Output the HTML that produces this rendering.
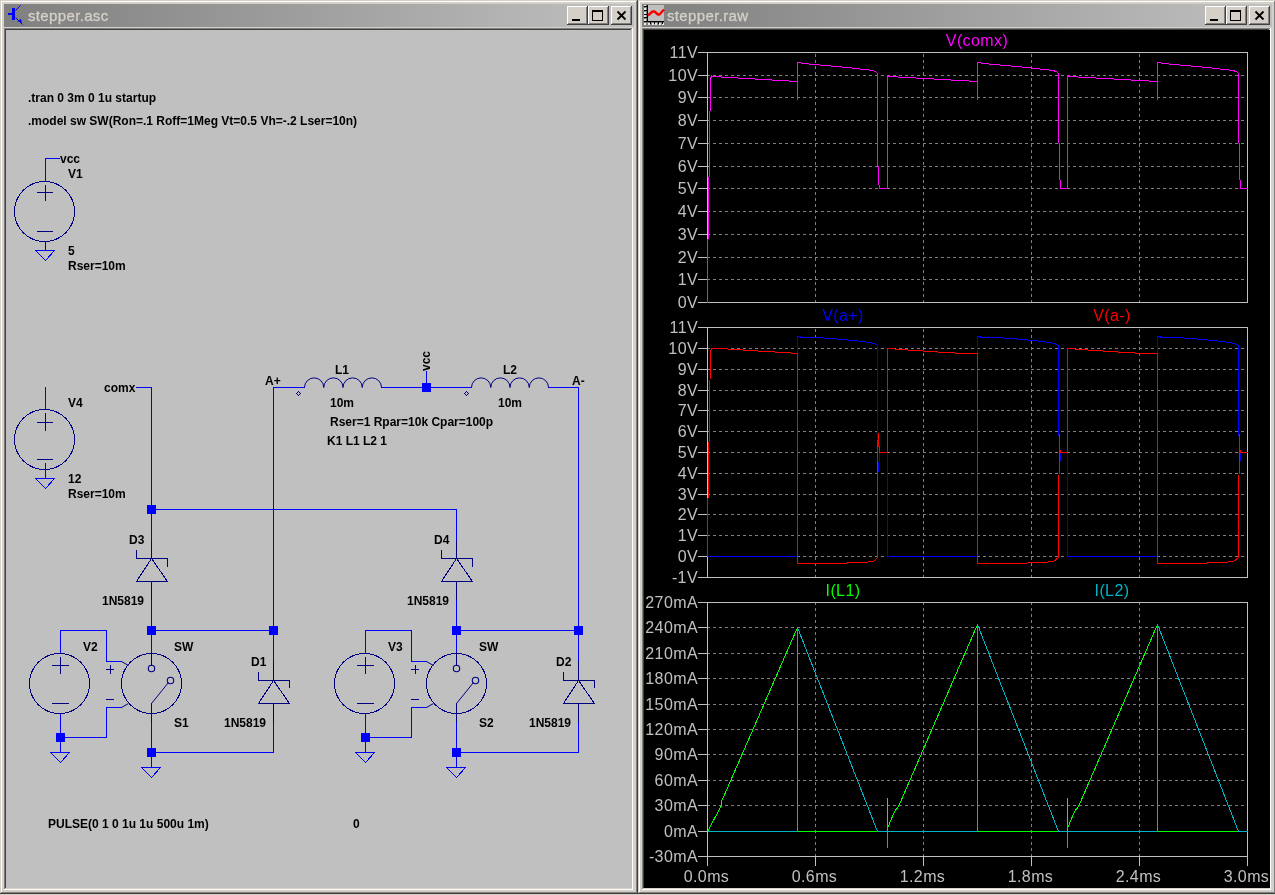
<!DOCTYPE html>
<html><head><meta charset="utf-8"><title>stepper</title>
<style>html,body{margin:0;padding:0;width:1275px;height:895px;overflow:hidden;background:#d4d0c8;position:relative}
svg text{white-space:pre}</style></head><body>
<svg width="1275" height="895" viewBox="0 0 1275 895" style="position:absolute;left:0;top:0;will-change:transform" font-family="'Liberation Sans', sans-serif"><defs><linearGradient id="cap" x1="0" x2="1" y1="0" y2="0"><stop offset="0" stop-color="#808080"/><stop offset="1" stop-color="#c0c0c0"/></linearGradient></defs><rect x="0" y="0" width="1275" height="895" fill="#d4d0c8"/><rect x="0" y="0" width="638" height="894" fill="#d4d0c8"/><rect x="1" y="1" width="635" height="1" fill="#ffffff"/><rect x="1" y="1" width="1" height="891" fill="#ffffff"/><rect x="636" y="1" width="1" height="892" fill="#808080"/><rect x="1" y="892" width="636" height="1" fill="#808080"/><rect x="637" y="0" width="1" height="894" fill="#404040"/><rect x="0" y="893" width="638" height="1" fill="#404040"/><rect x="4" y="4" width="630" height="23" fill="url(#cap)"/><rect x="4" y="28" width="629" height="1" fill="#808080"/><rect x="4" y="28" width="1" height="861" fill="#808080"/><rect x="5" y="29" width="627" height="1" fill="#404040"/><rect x="5" y="29" width="1" height="859" fill="#404040"/><rect x="632" y="28" width="1" height="862" fill="#ffffff"/><rect x="4" y="889" width="629" height="1" fill="#ffffff"/><rect x="631" y="29" width="1" height="860" fill="#d4d0c8"/><rect x="5" y="888" width="627" height="1" fill="#d4d0c8"/><rect x="567" y="6" width="21" height="19" fill="#d4d0c8"/><rect x="567" y="6" width="21" height="1" fill="#ffffff"/><rect x="567" y="6" width="1" height="19" fill="#ffffff"/><rect x="568" y="23" width="19" height="1" fill="#808080"/><rect x="586" y="7" width="1" height="17" fill="#808080"/><rect x="567" y="24" width="21" height="1" fill="#404040"/><rect x="587" y="6" width="1" height="19" fill="#404040"/><rect x="588" y="6" width="21" height="19" fill="#d4d0c8"/><rect x="588" y="6" width="21" height="1" fill="#ffffff"/><rect x="588" y="6" width="1" height="19" fill="#ffffff"/><rect x="589" y="23" width="19" height="1" fill="#808080"/><rect x="607" y="7" width="1" height="17" fill="#808080"/><rect x="588" y="24" width="21" height="1" fill="#404040"/><rect x="608" y="6" width="1" height="19" fill="#404040"/><rect x="611" y="6" width="21" height="19" fill="#d4d0c8"/><rect x="611" y="6" width="21" height="1" fill="#ffffff"/><rect x="611" y="6" width="1" height="19" fill="#ffffff"/><rect x="612" y="23" width="19" height="1" fill="#808080"/><rect x="630" y="7" width="1" height="17" fill="#808080"/><rect x="611" y="24" width="21" height="1" fill="#404040"/><rect x="631" y="6" width="1" height="19" fill="#404040"/><rect x="572" y="19" width="8" height="2" fill="#000"/><rect x="592.5" y="10.5" width="10" height="10" fill="none" stroke="#000" stroke-width="1"/><rect x="592" y="10" width="11" height="2" fill="#000"/><path d="M617.5 11.5 L625.5 19.5 M625.5 11.5 L617.5 19.5" stroke="#000" stroke-width="1.8" fill="none"/><rect x="638" y="0" width="638" height="894" fill="#d4d0c8"/><rect x="639" y="1" width="635" height="1" fill="#ffffff"/><rect x="639" y="1" width="1" height="891" fill="#ffffff"/><rect x="1274" y="1" width="1" height="892" fill="#808080"/><rect x="639" y="892" width="636" height="1" fill="#808080"/><rect x="1275" y="0" width="1" height="894" fill="#404040"/><rect x="638" y="893" width="638" height="1" fill="#404040"/><rect x="642" y="4" width="630" height="23" fill="url(#cap)"/><rect x="642" y="28" width="629" height="1" fill="#808080"/><rect x="642" y="28" width="1" height="861" fill="#808080"/><rect x="643" y="29" width="627" height="1" fill="#404040"/><rect x="643" y="29" width="1" height="859" fill="#404040"/><rect x="1270" y="28" width="1" height="862" fill="#ffffff"/><rect x="642" y="889" width="629" height="1" fill="#ffffff"/><rect x="1269" y="29" width="1" height="860" fill="#d4d0c8"/><rect x="643" y="888" width="627" height="1" fill="#d4d0c8"/><rect x="1205" y="6" width="21" height="19" fill="#d4d0c8"/><rect x="1205" y="6" width="21" height="1" fill="#ffffff"/><rect x="1205" y="6" width="1" height="19" fill="#ffffff"/><rect x="1206" y="23" width="19" height="1" fill="#808080"/><rect x="1224" y="7" width="1" height="17" fill="#808080"/><rect x="1205" y="24" width="21" height="1" fill="#404040"/><rect x="1225" y="6" width="1" height="19" fill="#404040"/><rect x="1226" y="6" width="21" height="19" fill="#d4d0c8"/><rect x="1226" y="6" width="21" height="1" fill="#ffffff"/><rect x="1226" y="6" width="1" height="19" fill="#ffffff"/><rect x="1227" y="23" width="19" height="1" fill="#808080"/><rect x="1245" y="7" width="1" height="17" fill="#808080"/><rect x="1226" y="24" width="21" height="1" fill="#404040"/><rect x="1246" y="6" width="1" height="19" fill="#404040"/><rect x="1249" y="6" width="21" height="19" fill="#d4d0c8"/><rect x="1249" y="6" width="21" height="1" fill="#ffffff"/><rect x="1249" y="6" width="1" height="19" fill="#ffffff"/><rect x="1250" y="23" width="19" height="1" fill="#808080"/><rect x="1268" y="7" width="1" height="17" fill="#808080"/><rect x="1249" y="24" width="21" height="1" fill="#404040"/><rect x="1269" y="6" width="1" height="19" fill="#404040"/><rect x="1210" y="19" width="8" height="2" fill="#000"/><rect x="1230.5" y="10.5" width="10" height="10" fill="none" stroke="#000" stroke-width="1"/><rect x="1230" y="10" width="11" height="2" fill="#000"/><path d="M1255.5 11.5 L1263.5 19.5 M1263.5 11.5 L1255.5 19.5" stroke="#000" stroke-width="1.8" fill="none"/><rect x="6" y="30" width="626" height="858" fill="#c0c0c0"/><rect x="644" y="30" width="626" height="858" fill="#000000"/><text x="28" y="21" fill="#d4d0c8" font-size="15" font-weight="normal" text-anchor="start" stroke="#d4d0c8" stroke-width="0.3" letter-spacing="0.35">stepper.asc</text><text x="667" y="21" fill="#d4d0c8" font-size="15" font-weight="normal" text-anchor="start" stroke="#d4d0c8" stroke-width="0.3" letter-spacing="0.35">stepper.raw</text><g shape-rendering="crispEdges"><rect x="8" y="13" width="4" height="2" fill="#0000ff"/><rect x="12" y="8" width="3" height="12" fill="#0000ff"/></g><line x1="15.5" y1="10.5" x2="20.5" y2="5.5" stroke="#0000ff" stroke-width="1"/><line x1="15.5" y1="17.5" x2="22.5" y2="24.5" stroke="#0000ff" stroke-width="1"/><path d="M17 21 L21 19 L22 23 Z" fill="#0000ff"/><rect x="648" y="5" width="16" height="16" fill="#c0c0c0"/><rect x="647" y="5" width="1" height="17" fill="#000"/><rect x="644" y="21" width="20" height="1" fill="#000"/><rect x="644" y="5" width="2" height="2" fill="#e8e8e8"/><rect x="644" y="8" width="2" height="2" fill="#e8e8e8"/><rect x="644" y="12" width="2" height="2" fill="#e8e8e8"/><rect x="644" y="15" width="2" height="2" fill="#e8e8e8"/><rect x="644" y="19" width="2" height="2" fill="#e8e8e8"/><rect x="644" y="23" width="2" height="2" fill="#e8e8e8"/><rect x="644" y="6" width="3" height="1" fill="#000"/><rect x="644" y="10" width="3" height="1" fill="#000"/><rect x="644" y="14" width="3" height="1" fill="#000"/><rect x="644" y="17" width="3" height="1" fill="#000"/><rect x="648" y="23" width="2" height="2" fill="#e8e8e8"/><rect x="652" y="23" width="2" height="2" fill="#e8e8e8"/><rect x="655" y="23" width="2" height="2" fill="#e8e8e8"/><rect x="659" y="23" width="2" height="2" fill="#e8e8e8"/><rect x="662" y="23" width="2" height="2" fill="#e8e8e8"/><rect x="650" y="21" width="1" height="3" fill="#000"/><rect x="654" y="21" width="1" height="3" fill="#000"/><rect x="658" y="21" width="1" height="3" fill="#000"/><rect x="662" y="21" width="1" height="3" fill="#000"/><polyline points="648,15.5 652.5,11.5 654.5,11.5 658,14.5 659.5,14.5 664,9.5" fill="none" stroke="#ff0000" stroke-width="2.4" stroke-linejoin="round"/><g shape-rendering="crispEdges"></g><g shape-rendering="crispEdges"><rect x="45" y="158" width="1" height="24" fill="#0000ff"/><rect x="45" y="158" width="15" height="1" fill="#0000ff"/></g><circle cx="44.5" cy="211.5" r="30" fill="none" stroke="#000080" stroke-width="1" shape-rendering="crispEdges"/><g shape-rendering="crispEdges"><rect x="37" y="192" width="16" height="1" fill="#000080"/><rect x="45" y="185" width="1" height="16" fill="#000080"/><rect x="37" y="231" width="16" height="1" fill="#000080"/><rect x="45" y="241" width="1" height="9" fill="#000080"/><polyline points="35.5,250.5 54.5,250.5 45.5,260.5 35.5,250.5" fill="none" stroke="#0000ff" stroke-width="1" /><rect x="45" y="387" width="1" height="23" fill="#0000ff"/></g><circle cx="44.5" cy="439.5" r="30" fill="none" stroke="#000080" stroke-width="1" shape-rendering="crispEdges"/><g shape-rendering="crispEdges"><rect x="37" y="422" width="16" height="1" fill="#000080"/><rect x="45" y="413" width="1" height="18" fill="#000080"/><rect x="37" y="459" width="16" height="1" fill="#000080"/><rect x="45" y="463" width="1" height="16" fill="#0000ff"/><polyline points="35.5,478.5 54.5,478.5 45.5,488.5 35.5,478.5" fill="none" stroke="#0000ff" stroke-width="1" /><rect x="136" y="387" width="16" height="1" fill="#0000ff"/><rect x="151" y="387" width="1" height="123" fill="#0000ff"/><rect x="147" y="505" width="9" height="9" fill="#0000ff"/><rect x="151" y="509" width="1" height="32" fill="#0000ff"/><rect x="151" y="540" width="1" height="19" fill="#000080"/><rect x="136" y="558" width="32" height="1" fill="#000080"/><rect x="136" y="550" width="1" height="9" fill="#000080"/><rect x="167" y="558" width="1" height="9" fill="#000080"/><polyline points="151.5,558.5 167.5,581.5 136.5,581.5 151.5,558.5" fill="none" stroke="#000080" stroke-width="1" /><rect x="151" y="581" width="1" height="20" fill="#000080"/><rect x="151" y="600" width="1" height="31" fill="#0000ff"/><rect x="147" y="626" width="9" height="9" fill="#0000ff"/><rect x="151" y="630" width="123" height="1" fill="#0000ff"/><rect x="269" y="626" width="9" height="9" fill="#0000ff"/><rect x="273" y="630" width="1" height="32" fill="#0000ff"/><rect x="273" y="661" width="1" height="20" fill="#000080"/><rect x="258" y="680" width="32" height="1" fill="#000080"/><rect x="258" y="672" width="1" height="9" fill="#000080"/><rect x="289" y="680" width="1" height="8" fill="#000080"/><polyline points="273.5,680.5 289.5,703.5 258.5,703.5 273.5,680.5" fill="none" stroke="#000080" stroke-width="1" /><rect x="273" y="703" width="1" height="19" fill="#000080"/><rect x="273" y="722" width="1" height="31" fill="#0000ff"/><rect x="151" y="752" width="123" height="1" fill="#0000ff"/><rect x="147" y="748" width="9" height="9" fill="#0000ff"/><rect x="151" y="630" width="1" height="23" fill="#0000ff"/><rect x="151" y="652" width="1" height="14" fill="#000080"/><rect x="151" y="703" width="1" height="19" fill="#000080"/><rect x="151" y="722" width="1" height="31" fill="#0000ff"/><rect x="151" y="752" width="1" height="16" fill="#0000ff"/><polyline points="141.5,767.5 160.5,767.5 151.5,777.5 141.5,767.5" fill="none" stroke="#0000ff" stroke-width="1" /><rect x="60" y="630" width="1" height="24" fill="#0000ff"/><rect x="60" y="630" width="47" height="1" fill="#0000ff"/><rect x="106" y="630" width="1" height="32" fill="#0000ff"/><rect x="106" y="661" width="16" height="1" fill="#0000ff"/><rect x="60" y="714" width="1" height="24" fill="#0000ff"/><rect x="56" y="733" width="9" height="9" fill="#0000ff"/><rect x="60" y="737" width="47" height="1" fill="#0000ff"/><rect x="106" y="707" width="1" height="31" fill="#0000ff"/><rect x="106" y="707" width="16" height="1" fill="#0000ff"/><rect x="60" y="737" width="1" height="16" fill="#0000ff"/><polyline points="50.5,752.5 69.5,752.5 60.5,762.5 50.5,752.5" fill="none" stroke="#0000ff" stroke-width="1" /><rect x="52" y="665" width="17" height="1" fill="#000080"/><rect x="60" y="657" width="1" height="17" fill="#000080"/><rect x="52" y="703" width="17" height="1" fill="#000080"/><rect x="106" y="669" width="8" height="1" fill="#000080"/><rect x="110" y="665" width="1" height="9" fill="#000080"/><rect x="106" y="699" width="8" height="1" fill="#000080"/><rect x="456" y="509" width="1" height="32" fill="#0000ff"/><rect x="456" y="540" width="1" height="19" fill="#000080"/><rect x="441" y="558" width="32" height="1" fill="#000080"/><rect x="441" y="550" width="1" height="9" fill="#000080"/><rect x="472" y="558" width="1" height="9" fill="#000080"/><polyline points="456.5,558.5 472.5,581.5 441.5,581.5 456.5,558.5" fill="none" stroke="#000080" stroke-width="1" /><rect x="456" y="581" width="1" height="20" fill="#000080"/><rect x="456" y="600" width="1" height="31" fill="#0000ff"/><rect x="452" y="626" width="9" height="9" fill="#0000ff"/><rect x="456" y="630" width="123" height="1" fill="#0000ff"/><rect x="574" y="626" width="9" height="9" fill="#0000ff"/><rect x="578" y="630" width="1" height="32" fill="#0000ff"/><rect x="578" y="661" width="1" height="20" fill="#000080"/><rect x="563" y="680" width="32" height="1" fill="#000080"/><rect x="563" y="672" width="1" height="9" fill="#000080"/><rect x="594" y="680" width="1" height="8" fill="#000080"/><polyline points="578.5,680.5 594.5,703.5 563.5,703.5 578.5,680.5" fill="none" stroke="#000080" stroke-width="1" /><rect x="578" y="703" width="1" height="19" fill="#000080"/><rect x="578" y="722" width="1" height="31" fill="#0000ff"/><rect x="456" y="752" width="123" height="1" fill="#0000ff"/><rect x="452" y="748" width="9" height="9" fill="#0000ff"/><rect x="456" y="630" width="1" height="23" fill="#0000ff"/><rect x="456" y="652" width="1" height="14" fill="#000080"/><rect x="456" y="703" width="1" height="19" fill="#000080"/><rect x="456" y="722" width="1" height="31" fill="#0000ff"/><rect x="456" y="752" width="1" height="16" fill="#0000ff"/><polyline points="446.5,767.5 465.5,767.5 456.5,777.5 446.5,767.5" fill="none" stroke="#0000ff" stroke-width="1" /><rect x="365" y="630" width="1" height="24" fill="#0000ff"/><rect x="365" y="630" width="47" height="1" fill="#0000ff"/><rect x="411" y="630" width="1" height="32" fill="#0000ff"/><rect x="411" y="661" width="16" height="1" fill="#0000ff"/><rect x="365" y="714" width="1" height="24" fill="#0000ff"/><rect x="361" y="733" width="9" height="9" fill="#0000ff"/><rect x="365" y="737" width="47" height="1" fill="#0000ff"/><rect x="411" y="707" width="1" height="31" fill="#0000ff"/><rect x="411" y="707" width="16" height="1" fill="#0000ff"/><rect x="365" y="737" width="1" height="16" fill="#0000ff"/><polyline points="355.5,752.5 374.5,752.5 365.5,762.5 355.5,752.5" fill="none" stroke="#0000ff" stroke-width="1" /><rect x="357" y="665" width="17" height="1" fill="#000080"/><rect x="365" y="657" width="1" height="17" fill="#000080"/><rect x="357" y="703" width="17" height="1" fill="#000080"/><rect x="411" y="669" width="8" height="1" fill="#000080"/><rect x="415" y="665" width="1" height="9" fill="#000080"/><rect x="411" y="699" width="8" height="1" fill="#000080"/></g><circle cx="151.5" cy="683.5" r="30" fill="none" stroke="#000080" stroke-width="1" shape-rendering="crispEdges"/><circle cx="59.5" cy="683.5" r="30" fill="none" stroke="#000080" stroke-width="1" shape-rendering="crispEdges"/><circle cx="151.5" cy="668.5" r="3.2" fill="none" stroke="#000080" stroke-width="1.1"/><circle cx="170.5" cy="680.5" r="3.2" fill="none" stroke="#000080" stroke-width="1.1"/><line x1="151.5" y1="703.5" x2="168.5" y2="682.5" stroke="#000080" stroke-width="1"/><line x1="121.5" y1="661.5" x2="128.5" y2="665.5" stroke="#000080" stroke-width="1"/><line x1="121.5" y1="707.5" x2="128.5" y2="703.5" stroke="#000080" stroke-width="1"/><circle cx="456.5" cy="683.5" r="30" fill="none" stroke="#000080" stroke-width="1" shape-rendering="crispEdges"/><circle cx="364.5" cy="683.5" r="30" fill="none" stroke="#000080" stroke-width="1" shape-rendering="crispEdges"/><circle cx="456.5" cy="668.5" r="3.2" fill="none" stroke="#000080" stroke-width="1.1"/><circle cx="475.5" cy="680.5" r="3.2" fill="none" stroke="#000080" stroke-width="1.1"/><line x1="456.5" y1="703.5" x2="473.5" y2="682.5" stroke="#000080" stroke-width="1"/><line x1="426.5" y1="661.5" x2="433.5" y2="665.5" stroke="#000080" stroke-width="1"/><line x1="426.5" y1="707.5" x2="433.5" y2="703.5" stroke="#000080" stroke-width="1"/><g shape-rendering="crispEdges"><rect x="273" y="387" width="1" height="244" fill="#0000ff"/><rect x="273" y="387" width="32" height="1" fill="#0000ff"/><rect x="381" y="387" width="91" height="1" fill="#0000ff"/><rect x="422" y="383" width="9" height="9" fill="#0000ff"/><rect x="426" y="371" width="1" height="17" fill="#0000ff"/><rect x="548" y="387" width="31" height="1" fill="#0000ff"/><rect x="578" y="387" width="1" height="244" fill="#0000ff"/><rect x="151" y="509" width="306" height="1" fill="#0000ff"/></g><path d="M304.5 387.5 A9.625 9.625 0 0 1 323.75 387.5 A9.625 9.625 0 0 1 343.0 387.5 A9.625 9.625 0 0 1 362.25 387.5 A9.625 9.625 0 0 1 381.5 387.5" fill="none" stroke="#000080" stroke-width="1"/><path d="M471.5 387.5 A9.625 9.625 0 0 1 490.75 387.5 A9.625 9.625 0 0 1 510.0 387.5 A9.625 9.625 0 0 1 529.25 387.5 A9.625 9.625 0 0 1 548.5 387.5" fill="none" stroke="#000080" stroke-width="1"/><circle cx="298.5" cy="393.5" r="1.8" fill="none" stroke="#000080" stroke-width="1" shape-rendering="crispEdges"/><circle cx="466.5" cy="393.5" r="1.8" fill="none" stroke="#000080" stroke-width="1" shape-rendering="crispEdges"/><text x="28" y="102" fill="#000" font-size="12" font-weight="bold" text-anchor="start" >.tran 0 3m 0 1u startup</text><text x="28" y="125" fill="#000" font-size="12" font-weight="bold" text-anchor="start" >.model sw SW(Ron=.1 Roff=1Meg Vt=0.5 Vh=-.2 Lser=10n)</text><text x="60" y="163" fill="#000" font-size="12" font-weight="bold" text-anchor="start" >vcc</text><text x="68" y="178" fill="#000" font-size="12" font-weight="bold" text-anchor="start" >V1</text><text x="68" y="255" fill="#000" font-size="12" font-weight="bold" text-anchor="start" >5</text><text x="68" y="270" fill="#000" font-size="12" font-weight="bold" text-anchor="start" >Rser=10m</text><text x="68" y="407" fill="#000" font-size="12" font-weight="bold" text-anchor="start" >V4</text><text x="68" y="483" fill="#000" font-size="12" font-weight="bold" text-anchor="start" >12</text><text x="68" y="498" fill="#000" font-size="12" font-weight="bold" text-anchor="start" >Rser=10m</text><text x="104" y="392" fill="#000" font-size="12" font-weight="bold" text-anchor="start" >comx</text><text x="265" y="385" fill="#000" font-size="12" font-weight="bold" text-anchor="start" >A+</text><text x="335" y="374" fill="#000" font-size="12" font-weight="bold" text-anchor="start" >L1</text><text x="330" y="407" fill="#000" font-size="12" font-weight="bold" text-anchor="start" >10m</text><text x="330" y="426" fill="#000" font-size="12" font-weight="bold" text-anchor="start" >Rser=1 Rpar=10k Cpar=100p</text><text x="327" y="445" fill="#000" font-size="12" font-weight="bold" text-anchor="start" >K1 L1 L2 1</text><text x="503" y="374" fill="#000" font-size="12" font-weight="bold" text-anchor="start" >L2</text><text x="498" y="407" fill="#000" font-size="12" font-weight="bold" text-anchor="start" >10m</text><text x="572" y="385" fill="#000" font-size="12" font-weight="bold" text-anchor="start" >A-</text><text x="48" y="828" fill="#000" font-size="12" font-weight="bold" text-anchor="start" >PULSE(0 1 0 1u 1u 500u 1m)</text><text x="353" y="828" fill="#000" font-size="12" font-weight="bold" text-anchor="start" >0</text><text x="129" y="544" fill="#000" font-size="12" font-weight="bold" text-anchor="start" >D3</text><text x="102" y="605" fill="#000" font-size="12" font-weight="bold" text-anchor="start" >1N5819</text><text x="83" y="651" fill="#000" font-size="12" font-weight="bold" text-anchor="start" >V2</text><text x="174" y="651" fill="#000" font-size="12" font-weight="bold" text-anchor="start" >SW</text><text x="174" y="727" fill="#000" font-size="12" font-weight="bold" text-anchor="start" >S1</text><text x="251" y="666" fill="#000" font-size="12" font-weight="bold" text-anchor="start" >D1</text><text x="224" y="727" fill="#000" font-size="12" font-weight="bold" text-anchor="start" >1N5819</text><text x="434" y="544" fill="#000" font-size="12" font-weight="bold" text-anchor="start" >D4</text><text x="407" y="605" fill="#000" font-size="12" font-weight="bold" text-anchor="start" >1N5819</text><text x="388" y="651" fill="#000" font-size="12" font-weight="bold" text-anchor="start" >V3</text><text x="479" y="651" fill="#000" font-size="12" font-weight="bold" text-anchor="start" >SW</text><text x="479" y="727" fill="#000" font-size="12" font-weight="bold" text-anchor="start" >S2</text><text x="556" y="666" fill="#000" font-size="12" font-weight="bold" text-anchor="start" >D2</text><text x="529" y="727" fill="#000" font-size="12" font-weight="bold" text-anchor="start" >1N5819</text><text x="429.5" y="371" fill="#000" font-size="12" font-weight="bold" text-anchor="start" transform="rotate(-90 429.5 371)">vcc</text><g shape-rendering="crispEdges"><line x1="707" y1="75.5" x2="1247" y2="75.5" stroke="#808080" stroke-width="1" stroke-dasharray="3 3"/><line x1="707" y1="97.5" x2="1247" y2="97.5" stroke="#808080" stroke-width="1" stroke-dasharray="3 3"/><line x1="707" y1="120.5" x2="1247" y2="120.5" stroke="#808080" stroke-width="1" stroke-dasharray="3 3"/><line x1="707" y1="143.5" x2="1247" y2="143.5" stroke="#808080" stroke-width="1" stroke-dasharray="3 3"/><line x1="707" y1="166.5" x2="1247" y2="166.5" stroke="#808080" stroke-width="1" stroke-dasharray="3 3"/><line x1="707" y1="188.5" x2="1247" y2="188.5" stroke="#808080" stroke-width="1" stroke-dasharray="3 3"/><line x1="707" y1="211.5" x2="1247" y2="211.5" stroke="#808080" stroke-width="1" stroke-dasharray="3 3"/><line x1="707" y1="234.5" x2="1247" y2="234.5" stroke="#808080" stroke-width="1" stroke-dasharray="3 3"/><line x1="707" y1="257.5" x2="1247" y2="257.5" stroke="#808080" stroke-width="1" stroke-dasharray="3 3"/><line x1="707" y1="279.5" x2="1247" y2="279.5" stroke="#808080" stroke-width="1" stroke-dasharray="3 3"/><line x1="815.5" y1="303" x2="815.5" y2="52" stroke="#808080" stroke-width="1" stroke-dasharray="3 3"/><line x1="923.5" y1="303" x2="923.5" y2="52" stroke="#808080" stroke-width="1" stroke-dasharray="3 3"/><line x1="1031.5" y1="303" x2="1031.5" y2="52" stroke="#808080" stroke-width="1" stroke-dasharray="3 3"/><line x1="1139.5" y1="303" x2="1139.5" y2="52" stroke="#808080" stroke-width="1" stroke-dasharray="3 3"/><rect x="707" y="52" width="541" height="1" fill="#c0c0c0"/><rect x="707" y="302" width="541" height="1" fill="#c0c0c0"/><rect x="707" y="52" width="1" height="251" fill="#c0c0c0"/><rect x="1247" y="52" width="1" height="251" fill="#c0c0c0"/><rect x="698" y="52" width="10" height="1" fill="#c0c0c0"/><rect x="698" y="75" width="10" height="1" fill="#c0c0c0"/><rect x="698" y="97" width="10" height="1" fill="#c0c0c0"/><rect x="698" y="120" width="10" height="1" fill="#c0c0c0"/><rect x="698" y="143" width="10" height="1" fill="#c0c0c0"/><rect x="698" y="166" width="10" height="1" fill="#c0c0c0"/><rect x="698" y="188" width="10" height="1" fill="#c0c0c0"/><rect x="698" y="211" width="10" height="1" fill="#c0c0c0"/><rect x="698" y="234" width="10" height="1" fill="#c0c0c0"/><rect x="698" y="257" width="10" height="1" fill="#c0c0c0"/><rect x="698" y="279" width="10" height="1" fill="#c0c0c0"/><rect x="698" y="302" width="10" height="1" fill="#c0c0c0"/></g><text x="698" y="58" fill="#c0c0c0" font-size="16" font-weight="normal" text-anchor="end" letter-spacing="0.4">11V</text><text x="698" y="81" fill="#c0c0c0" font-size="16" font-weight="normal" text-anchor="end" letter-spacing="0.4">10V</text><text x="698" y="103" fill="#c0c0c0" font-size="16" font-weight="normal" text-anchor="end" letter-spacing="0.4">9V</text><text x="698" y="126" fill="#c0c0c0" font-size="16" font-weight="normal" text-anchor="end" letter-spacing="0.4">8V</text><text x="698" y="149" fill="#c0c0c0" font-size="16" font-weight="normal" text-anchor="end" letter-spacing="0.4">7V</text><text x="698" y="172" fill="#c0c0c0" font-size="16" font-weight="normal" text-anchor="end" letter-spacing="0.4">6V</text><text x="698" y="194" fill="#c0c0c0" font-size="16" font-weight="normal" text-anchor="end" letter-spacing="0.4">5V</text><text x="698" y="217" fill="#c0c0c0" font-size="16" font-weight="normal" text-anchor="end" letter-spacing="0.4">4V</text><text x="698" y="240" fill="#c0c0c0" font-size="16" font-weight="normal" text-anchor="end" letter-spacing="0.4">3V</text><text x="698" y="263" fill="#c0c0c0" font-size="16" font-weight="normal" text-anchor="end" letter-spacing="0.4">2V</text><text x="698" y="285" fill="#c0c0c0" font-size="16" font-weight="normal" text-anchor="end" letter-spacing="0.4">1V</text><text x="698" y="308" fill="#c0c0c0" font-size="16" font-weight="normal" text-anchor="end" letter-spacing="0.4">0V</text><g shape-rendering="crispEdges"><line x1="707" y1="348.5" x2="1247" y2="348.5" stroke="#808080" stroke-width="1" stroke-dasharray="3 3"/><line x1="707" y1="369.5" x2="1247" y2="369.5" stroke="#808080" stroke-width="1" stroke-dasharray="3 3"/><line x1="707" y1="390.5" x2="1247" y2="390.5" stroke="#808080" stroke-width="1" stroke-dasharray="3 3"/><line x1="707" y1="410.5" x2="1247" y2="410.5" stroke="#808080" stroke-width="1" stroke-dasharray="3 3"/><line x1="707" y1="431.5" x2="1247" y2="431.5" stroke="#808080" stroke-width="1" stroke-dasharray="3 3"/><line x1="707" y1="452.5" x2="1247" y2="452.5" stroke="#808080" stroke-width="1" stroke-dasharray="3 3"/><line x1="707" y1="473.5" x2="1247" y2="473.5" stroke="#808080" stroke-width="1" stroke-dasharray="3 3"/><line x1="707" y1="494.5" x2="1247" y2="494.5" stroke="#808080" stroke-width="1" stroke-dasharray="3 3"/><line x1="707" y1="514.5" x2="1247" y2="514.5" stroke="#808080" stroke-width="1" stroke-dasharray="3 3"/><line x1="707" y1="535.5" x2="1247" y2="535.5" stroke="#808080" stroke-width="1" stroke-dasharray="3 3"/><line x1="707" y1="556.5" x2="1247" y2="556.5" stroke="#808080" stroke-width="1" stroke-dasharray="3 3"/><line x1="815.5" y1="578" x2="815.5" y2="327" stroke="#808080" stroke-width="1" stroke-dasharray="3 3"/><line x1="923.5" y1="578" x2="923.5" y2="327" stroke="#808080" stroke-width="1" stroke-dasharray="3 3"/><line x1="1031.5" y1="578" x2="1031.5" y2="327" stroke="#808080" stroke-width="1" stroke-dasharray="3 3"/><line x1="1139.5" y1="578" x2="1139.5" y2="327" stroke="#808080" stroke-width="1" stroke-dasharray="3 3"/><rect x="707" y="327" width="541" height="1" fill="#c0c0c0"/><rect x="707" y="577" width="541" height="1" fill="#c0c0c0"/><rect x="707" y="327" width="1" height="251" fill="#c0c0c0"/><rect x="1247" y="327" width="1" height="251" fill="#c0c0c0"/><rect x="698" y="327" width="10" height="1" fill="#c0c0c0"/><rect x="698" y="348" width="10" height="1" fill="#c0c0c0"/><rect x="698" y="369" width="10" height="1" fill="#c0c0c0"/><rect x="698" y="390" width="10" height="1" fill="#c0c0c0"/><rect x="698" y="410" width="10" height="1" fill="#c0c0c0"/><rect x="698" y="431" width="10" height="1" fill="#c0c0c0"/><rect x="698" y="452" width="10" height="1" fill="#c0c0c0"/><rect x="698" y="473" width="10" height="1" fill="#c0c0c0"/><rect x="698" y="494" width="10" height="1" fill="#c0c0c0"/><rect x="698" y="514" width="10" height="1" fill="#c0c0c0"/><rect x="698" y="535" width="10" height="1" fill="#c0c0c0"/><rect x="698" y="556" width="10" height="1" fill="#c0c0c0"/><rect x="698" y="577" width="10" height="1" fill="#c0c0c0"/></g><text x="698" y="333" fill="#c0c0c0" font-size="16" font-weight="normal" text-anchor="end" letter-spacing="0.4">11V</text><text x="698" y="354" fill="#c0c0c0" font-size="16" font-weight="normal" text-anchor="end" letter-spacing="0.4">10V</text><text x="698" y="375" fill="#c0c0c0" font-size="16" font-weight="normal" text-anchor="end" letter-spacing="0.4">9V</text><text x="698" y="396" fill="#c0c0c0" font-size="16" font-weight="normal" text-anchor="end" letter-spacing="0.4">8V</text><text x="698" y="416" fill="#c0c0c0" font-size="16" font-weight="normal" text-anchor="end" letter-spacing="0.4">7V</text><text x="698" y="437" fill="#c0c0c0" font-size="16" font-weight="normal" text-anchor="end" letter-spacing="0.4">6V</text><text x="698" y="458" fill="#c0c0c0" font-size="16" font-weight="normal" text-anchor="end" letter-spacing="0.4">5V</text><text x="698" y="479" fill="#c0c0c0" font-size="16" font-weight="normal" text-anchor="end" letter-spacing="0.4">4V</text><text x="698" y="500" fill="#c0c0c0" font-size="16" font-weight="normal" text-anchor="end" letter-spacing="0.4">3V</text><text x="698" y="520" fill="#c0c0c0" font-size="16" font-weight="normal" text-anchor="end" letter-spacing="0.4">2V</text><text x="698" y="541" fill="#c0c0c0" font-size="16" font-weight="normal" text-anchor="end" letter-spacing="0.4">1V</text><text x="698" y="562" fill="#c0c0c0" font-size="16" font-weight="normal" text-anchor="end" letter-spacing="0.4">0V</text><text x="698" y="583" fill="#c0c0c0" font-size="16" font-weight="normal" text-anchor="end" letter-spacing="0.4">-1V</text><g shape-rendering="crispEdges"><line x1="707" y1="627.5" x2="1247" y2="627.5" stroke="#808080" stroke-width="1" stroke-dasharray="3 3"/><line x1="707" y1="653.5" x2="1247" y2="653.5" stroke="#808080" stroke-width="1" stroke-dasharray="3 3"/><line x1="707" y1="678.5" x2="1247" y2="678.5" stroke="#808080" stroke-width="1" stroke-dasharray="3 3"/><line x1="707" y1="704.5" x2="1247" y2="704.5" stroke="#808080" stroke-width="1" stroke-dasharray="3 3"/><line x1="707" y1="729.5" x2="1247" y2="729.5" stroke="#808080" stroke-width="1" stroke-dasharray="3 3"/><line x1="707" y1="754.5" x2="1247" y2="754.5" stroke="#808080" stroke-width="1" stroke-dasharray="3 3"/><line x1="707" y1="780.5" x2="1247" y2="780.5" stroke="#808080" stroke-width="1" stroke-dasharray="3 3"/><line x1="707" y1="805.5" x2="1247" y2="805.5" stroke="#808080" stroke-width="1" stroke-dasharray="3 3"/><line x1="707" y1="831.5" x2="1247" y2="831.5" stroke="#808080" stroke-width="1" stroke-dasharray="3 3"/><line x1="815.5" y1="857" x2="815.5" y2="602" stroke="#808080" stroke-width="1" stroke-dasharray="3 3"/><line x1="923.5" y1="857" x2="923.5" y2="602" stroke="#808080" stroke-width="1" stroke-dasharray="3 3"/><line x1="1031.5" y1="857" x2="1031.5" y2="602" stroke="#808080" stroke-width="1" stroke-dasharray="3 3"/><line x1="1139.5" y1="857" x2="1139.5" y2="602" stroke="#808080" stroke-width="1" stroke-dasharray="3 3"/><rect x="707" y="602" width="541" height="1" fill="#c0c0c0"/><rect x="707" y="856" width="541" height="1" fill="#c0c0c0"/><rect x="707" y="602" width="1" height="255" fill="#c0c0c0"/><rect x="1247" y="602" width="1" height="255" fill="#c0c0c0"/><rect x="698" y="602" width="10" height="1" fill="#c0c0c0"/><rect x="698" y="627" width="10" height="1" fill="#c0c0c0"/><rect x="698" y="653" width="10" height="1" fill="#c0c0c0"/><rect x="698" y="678" width="10" height="1" fill="#c0c0c0"/><rect x="698" y="704" width="10" height="1" fill="#c0c0c0"/><rect x="698" y="729" width="10" height="1" fill="#c0c0c0"/><rect x="698" y="754" width="10" height="1" fill="#c0c0c0"/><rect x="698" y="780" width="10" height="1" fill="#c0c0c0"/><rect x="698" y="805" width="10" height="1" fill="#c0c0c0"/><rect x="698" y="831" width="10" height="1" fill="#c0c0c0"/><rect x="698" y="856" width="10" height="1" fill="#c0c0c0"/></g><text x="698" y="608" fill="#c0c0c0" font-size="16" font-weight="normal" text-anchor="end" letter-spacing="0.4">270mA</text><text x="698" y="633" fill="#c0c0c0" font-size="16" font-weight="normal" text-anchor="end" letter-spacing="0.4">240mA</text><text x="698" y="659" fill="#c0c0c0" font-size="16" font-weight="normal" text-anchor="end" letter-spacing="0.4">210mA</text><text x="698" y="684" fill="#c0c0c0" font-size="16" font-weight="normal" text-anchor="end" letter-spacing="0.4">180mA</text><text x="698" y="710" fill="#c0c0c0" font-size="16" font-weight="normal" text-anchor="end" letter-spacing="0.4">150mA</text><text x="698" y="735" fill="#c0c0c0" font-size="16" font-weight="normal" text-anchor="end" letter-spacing="0.4">120mA</text><text x="698" y="760" fill="#c0c0c0" font-size="16" font-weight="normal" text-anchor="end" letter-spacing="0.4">90mA</text><text x="698" y="786" fill="#c0c0c0" font-size="16" font-weight="normal" text-anchor="end" letter-spacing="0.4">60mA</text><text x="698" y="811" fill="#c0c0c0" font-size="16" font-weight="normal" text-anchor="end" letter-spacing="0.4">30mA</text><text x="698" y="837" fill="#c0c0c0" font-size="16" font-weight="normal" text-anchor="end" letter-spacing="0.4">0mA</text><text x="698" y="862" fill="#c0c0c0" font-size="16" font-weight="normal" text-anchor="end" letter-spacing="0.4">-30mA</text><g shape-rendering="crispEdges"><rect x="707" y="856" width="1" height="10" fill="#c0c0c0"/><rect x="815" y="856" width="1" height="10" fill="#c0c0c0"/><rect x="923" y="856" width="1" height="10" fill="#c0c0c0"/><rect x="1031" y="856" width="1" height="10" fill="#c0c0c0"/><rect x="1139" y="856" width="1" height="10" fill="#c0c0c0"/><rect x="1247" y="856" width="1" height="10" fill="#c0c0c0"/></g><text x="706.5" y="882" fill="#c0c0c0" font-size="16" font-weight="normal" text-anchor="middle" letter-spacing="0.4">0.0ms</text><text x="814.5" y="882" fill="#c0c0c0" font-size="16" font-weight="normal" text-anchor="middle" letter-spacing="0.4">0.6ms</text><text x="922.5" y="882" fill="#c0c0c0" font-size="16" font-weight="normal" text-anchor="middle" letter-spacing="0.4">1.2ms</text><text x="1030.5" y="882" fill="#c0c0c0" font-size="16" font-weight="normal" text-anchor="middle" letter-spacing="0.4">1.8ms</text><text x="1138.5" y="882" fill="#c0c0c0" font-size="16" font-weight="normal" text-anchor="middle" letter-spacing="0.4">2.4ms</text><text x="1246.5" y="882" fill="#c0c0c0" font-size="16" font-weight="normal" text-anchor="middle" letter-spacing="0.4">3.0ms</text><text x="977" y="46" fill="#ff00ff" font-size="16" font-weight="normal" text-anchor="middle" letter-spacing="0.4">V(comx)</text><text x="843" y="321" fill="#0000ff" font-size="16" font-weight="normal" text-anchor="middle" letter-spacing="0.4">V(a+)</text><text x="1112" y="321" fill="#ff0000" font-size="16" font-weight="normal" text-anchor="middle" letter-spacing="0.4">V(a-)</text><text x="843" y="596" fill="#00ff00" font-size="16" font-weight="normal" text-anchor="middle" letter-spacing="0.4">I(L1)</text><text x="1112" y="596" fill="#00b4c8" font-size="16" font-weight="normal" text-anchor="middle" letter-spacing="0.4">I(L2)</text><g shape-rendering="crispEdges"><polyline points="707.5,302.5 707.5,268.5 708.5,212.5 709.5,144.5 710.5,79.5 711.5,75.5 712.5,76.5 797.5,81.5 797.5,99.5 797.5,62.5 803.5,63.5 825.5,65.5 847.5,67.5 864.5,69.5 872.5,70.5 875.5,71.5 877.5,73.5 877.5,150.5 878.5,181.5 879.5,188.5 887.5,188.5 887.5,75.5 889.5,76.5 977.5,81.5 977.5,99.5 977.5,62.5 983.5,63.5 1005.5,65.5 1027.5,67.5 1044.5,69.5 1052.5,70.5 1056.5,71.5 1058.5,73.5 1058.5,114.5 1059.5,170.5 1060.5,188.5 1067.5,188.5 1067.5,75.5 1069.5,76.5 1157.5,81.5 1157.5,99.5 1157.5,62.5 1163.5,63.5 1185.5,65.5 1207.5,67.5 1224.5,69.5 1232.5,70.5 1236.5,71.5 1238.5,73.5 1238.5,114.5 1239.5,170.5 1240.5,188.5 1247.5,188.5" fill="none" stroke="#ff00ff" stroke-width="1" /><polyline points="707.5,556.5 797.5,556.5 797.5,336.5 803.5,337.5 815.5,337.5 831.5,338.5 842.5,339.5 853.5,340.5 862.5,341.5 869.5,342.5 874.5,343.5 877.5,345.5 877.5,460.5 878.5,471.5 879.5,453.5 880.5,452.5 887.5,452.5 887.5,556.5 977.5,556.5 977.5,336.5 983.5,337.5 995.5,337.5 1011.5,338.5 1022.5,339.5 1033.5,340.5 1042.5,341.5 1049.5,342.5 1054.5,343.5 1058.5,345.5 1058.5,400.5 1059.5,469.5 1060.5,452.5 1067.5,452.5 1067.5,556.5 1157.5,556.5 1157.5,336.5 1163.5,337.5 1175.5,337.5 1191.5,338.5 1202.5,339.5 1213.5,340.5 1222.5,341.5 1229.5,342.5 1234.5,343.5 1238.5,345.5 1238.5,400.5 1239.5,469.5 1240.5,452.5 1247.5,452.5" fill="none" stroke="#0000ff" stroke-width="1" /><polyline points="707.5,556.5 707.5,524.5 708.5,474.5 709.5,410.5 710.5,351.5 711.5,348.5 720.5,348.5 734.5,349.5 750.5,350.5 765.5,351.5 783.5,352.5 797.5,353.5 797.5,563.5 831.5,563.5 863.5,562.5 873.5,561.5 877.5,557.5 877.5,446.5 878.5,433.5 878.5,446.5 879.5,446.5 879.5,452.5 887.5,452.5 887.5,348.5 889.5,348.5 900.5,349.5 914.5,350.5 930.5,351.5 945.5,352.5 963.5,353.5 977.5,353.5 977.5,563.5 1011.5,563.5 1043.5,562.5 1053.5,561.5 1058.5,557.5 1058.5,504.5 1059.5,446.5 1059.5,433.5 1059.5,446.5 1060.5,452.5 1067.5,452.5 1067.5,348.5 1069.5,348.5 1080.5,349.5 1094.5,350.5 1110.5,351.5 1125.5,352.5 1143.5,353.5 1157.5,353.5 1157.5,563.5 1191.5,563.5 1223.5,562.5 1233.5,561.5 1238.5,557.5 1238.5,504.5 1239.5,446.5 1239.5,433.5 1239.5,446.5 1240.5,452.5 1247.5,452.5" fill="none" stroke="#ff0000" stroke-width="1" /><polyline points="707.5,831.5 721.5,805.5 721.5,801.5 797.5,627.5 797.5,831.5 887.5,831.5 887.5,797.5 887.5,828.5 894.5,811.5 898.5,806.5 977.5,624.5 977.5,831.5 1067.5,831.5 1067.5,797.5 1067.5,828.5 1074.5,811.5 1078.5,806.5 1157.5,624.5 1157.5,831.5 1247.5,831.5" fill="none" stroke="#00ff00" stroke-width="1" /><polyline points="707.5,831.5 797.5,831.5 797.5,627.5 877.5,831.5 887.5,831.5 887.5,847.5 887.5,831.5 977.5,831.5 977.5,624.5 1058.5,831.5 1067.5,831.5 1067.5,847.5 1067.5,831.5 1157.5,831.5 1157.5,624.5 1238.5,831.5 1247.5,831.5" fill="none" stroke="#00b4c8" stroke-width="1" /></g></svg>
</body></html>
